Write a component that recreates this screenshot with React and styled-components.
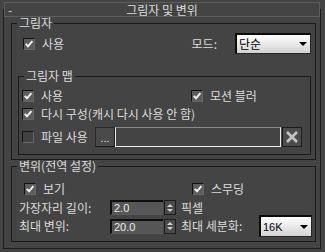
import React from 'react'
import styled, { createGlobalStyle } from 'styled-components'

const GlobalStyle = createGlobalStyle`
  html, body {
    margin: 0;
    padding: 0;
    background: #444444;
  }
  body {
    font-family: 'Noto Sans CJK KR', 'Noto Sans', sans-serif;
    font-size: 12px;
    color: #dcdcdc;
  }
  * {
    box-sizing: border-box;
  }
`

const Page = styled.div`
  width: 325px;
  height: 252px;
  padding: 9px 0 0 3px;
  background: #444444;
  overflow: hidden;
`

const Frame = styled.div`
  width: 318px;
  height: 240px;
  border: 1px solid #1c1c1c;
`

const Header = styled.div`
  display: grid;
  grid-template-columns: 1fr auto 1fr;
  align-items: center;
  height: 15px;
  margin-top: -8px;
  border: 1px solid #5e5e5e;
  background: #444444;
  line-height: 13px;
`

const Collapse = styled.span`
  padding-left: 3px;
`

const Body = styled.div`
  padding: 0 4px 0 7px;
`

const Group = styled.fieldset`
  margin: ${({ $margin }) => $margin || '0'};
  padding: 0;
  min-width: 0;
  border: 1px solid #1a1a1a;
`

const Legend = styled.legend`
  margin-left: 5px;
  padding: 0 2px;
  line-height: 14px;
`

const GroupBody = styled.div`
  display: flex;
  flex-direction: column;
  padding: ${({ $pad }) => $pad};
`

const Row = styled.div`
  display: flex;
  align-items: center;
  height: ${({ $h }) => $h}px;
  margin-top: ${({ $mt }) => $mt || 0}px;
  line-height: 14px;
  white-space: nowrap;
`

const CheckLabel = styled.div`
  display: flex;
  flex-shrink: 0;
  align-items: center;
  gap: 7px;
  width: ${({ $w }) => ($w ? `${$w}px` : 'auto')};
  margin-left: ${({ $ml }) => $ml || 0}px;
`

const Box = styled.span`
  display: flex;
  align-items: center;
  justify-content: center;
  width: 12px;
  height: 12px;
  border-style: solid;
  border-width: 1px;
  border-color: #111111 #666666 #666666 #111111;
  background: ${({ $checked }) => ($checked ? '#5c5c5c' : '#424242')};
`

const Label = styled.span`
  flex-shrink: 0;
  width: ${({ $w }) => ($w ? `${$w}px` : 'auto')};
  margin-left: ${({ $ml }) => $ml || 0}px;
  text-align: ${({ $right }) => ($right ? 'right' : 'left')};
`

const Select = styled.div`
  display: flex;
  flex-shrink: 0;
  align-items: center;
  justify-content: space-between;
  width: ${({ $w }) => $w}px;
  height: ${({ $h }) => $h}px;
  margin-left: ${({ $ml }) => $ml || 0}px;
  padding: 0 3px 0 2px;
  border-style: solid;
  border-width: 2px 1px 1px 2px;
  border-color: #0c0c0c #262626 #262626 #0c0c0c;
  background: linear-gradient(#ffffff, #d2d2d2);
  color: #000000;
  font-size: ${({ $latin }) => ($latin ? '11px' : '12px')};
  font-family: ${({ $latin }) =>
    $latin ? "'Liberation Sans', Arial, sans-serif" : 'inherit'};
`

const Arrow = styled.span`
  width: 0;
  height: 0;
  border-left: 4px solid transparent;
  border-right: 4px solid transparent;
  border-top: 4px solid #000000;
`

const NumField = styled.div`
  display: flex;
  flex-shrink: 0;
  align-items: center;
  width: 53px;
  height: 15px;
  padding-left: 2px;
  border-style: solid;
  border-width: 2px 0 1px 2px;
  border-color: #0e0e0e #555555 #5a5a5a #0e0e0e;
  background: #565656;
  color: #ececec;
  font-family: 'Liberation Sans', Arial, sans-serif;
  font-size: 11px;
`

const Spinner = styled.div`
  display: flex;
  flex-shrink: 0;
  flex-direction: column;
  align-items: center;
  justify-content: center;
  gap: 2px;
  width: 12px;
  height: 15px;
  margin-left: 1px;
  border: 1px solid #1c1c1c;
  background: #4a4a4a;
`

const Tri = styled.span`
  width: 0;
  height: 0;
  border-left: 3px solid transparent;
  border-right: 3px solid transparent;
  ${({ $up }) =>
    $up ? 'border-bottom: 3px solid #cfcfcf;' : 'border-top: 3px solid #cfcfcf;'}
`

const SmallButton = styled.div`
  display: flex;
  flex-shrink: 0;
  align-items: flex-end;
  justify-content: center;
  width: ${({ $w }) => $w}px;
  height: 20px;
  margin-left: ${({ $ml }) => $ml || 0}px;
  padding-bottom: 2px;
  border-style: solid;
  border-width: 1px;
  border-color: #2a2a2a #1a1a1a #1a1a1a #2a2a2a;
  background: #4a4a4a;
  color: #e4e8ff;
  font-family: 'Liberation Sans', Arial, sans-serif;
  font-size: 11px;
  line-height: 12px;
`

const PathField = styled.div`
  flex-shrink: 0;
  width: 166px;
  height: 20px;
  border: 1px solid #eeeeee;
  border-top-color: #8a8a8a;
  background: #444444;
`

const CloseButton = styled.div`
  display: flex;
  flex-shrink: 0;
  align-items: center;
  justify-content: center;
  width: 20px;
  height: 20px;
  margin-left: 1px;
  border: 1px solid #1c1c1c;
  background: #4c4c4c;
`

const Check = () => (
  <svg width="10" height="10" viewBox="0 0 10 10">
    <path d="M1.8 4.8 L4 7.3 L8.4 2.2" fill="none" stroke="#f0f0f0" strokeWidth="2" />
  </svg>
)

const CheckItem = ({ checked, label, w, ml }) => (
  <CheckLabel $w={w} $ml={ml}>
    <Box $checked={checked}>{checked && <Check />}</Box>
    <span>{label}</span>
  </CheckLabel>
)

const Spin = () => (
  <Spinner>
    <Tri $up />
    <Tri />
  </Spinner>
)

const App = () => {
  return (
    <Page>
      <GlobalStyle />
      <Frame>
        <Header>
          <Collapse>-</Collapse>
          <span>그림자 및 변위</span>
          <span />
        </Header>
        <Body>
          <Group $margin="-1px 0 0 0">
            <Legend>그림자</Legend>
            <GroupBody $pad="3px 3px 4px 11px">
              <Row $h={21}>
                <CheckItem checked label="사용" w={120} />
                <Label $w={74} $right>모드:</Label>
                <Select $w={76} $h={21} $ml={18}>
                  <span>단순</span>
                  <Arrow />
                </Select>
              </Row>
              <Group $margin="15px 1px 0 -5px">
                <Legend>그림자 맵</Legend>
                <GroupBody $pad="4px 0 7px 3px">
                  <Row $h={18}>
                    <CheckItem checked label="사용" w={169} />
                    <CheckItem checked label="모션 블러" />
                  </Row>
                  <Row $h={18}>
                    <CheckItem checked label="다시 구성(캐시 다시 사용 안 함)" />
                  </Row>
                  <Row $h={21} $mt={3}>
                    <CheckItem label="파일 사용" w={73} />
                    <SmallButton $w={20}>...</SmallButton>
                    <PathField />
                    <CloseButton>
                      <svg width="14" height="14" viewBox="0 0 14 14">
                        <path d="M2 2 L12 12 M12 2 L2 12" stroke="#c4c4c4" strokeWidth="2.6" />
                      </svg>
                    </CloseButton>
                  </Row>
                </GroupBody>
              </Group>
            </GroupBody>
          </Group>
          <Group $margin="-1px 0 0 0">
            <Legend>변위(전역 설정)</Legend>
            <GroupBody $pad="8px 3px 4px 7px">
              <Row $h={16}>
                <CheckItem checked label="보기" w={168} ml={5} />
                <CheckItem checked label="스무딩" />
              </Row>
              <Row $h={15} $mt={3}>
                <Label $w={91}>가장자리 길이:</Label>
                <NumField>2.0</NumField>
                <Spin />
                <Label $ml={5}>픽셀</Label>
              </Row>
              <Row $h={22}>
                <Label $w={91}>최대 변위:</Label>
                <NumField>20.0</NumField>
                <Spin />
                <Label $w={78} $ml={5}>최대 세분화:</Label>
                <Select $w={53} $h={22} $latin>
                  <span>16K</span>
                  <Arrow />
                </Select>
              </Row>
            </GroupBody>
          </Group>
        </Body>
      </Frame>
    </Page>
  )
}

export default App
